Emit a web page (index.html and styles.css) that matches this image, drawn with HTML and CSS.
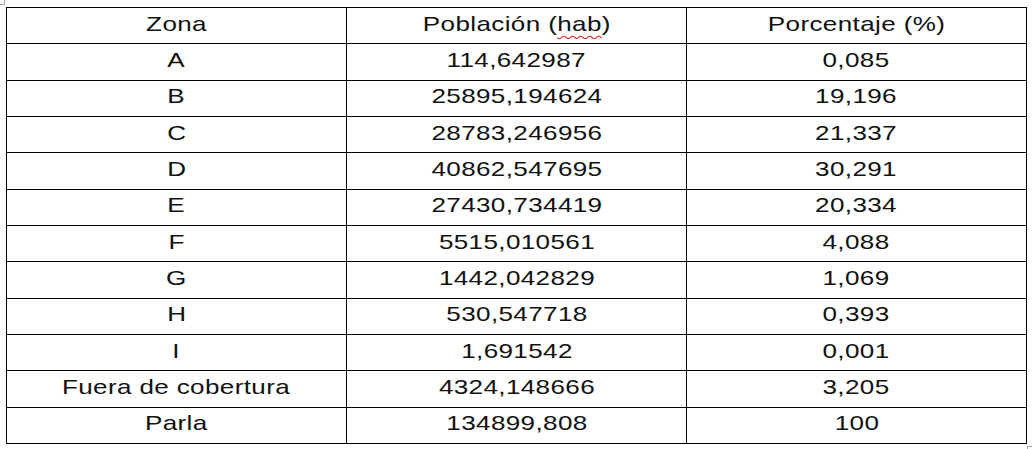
FILE: index.html
```html
<!DOCTYPE html>
<html lang="es">
<head>
<meta charset="utf-8">
<title>Tabla</title>
<link rel="stylesheet" href="styles.css">
</head>
<body>
<div class="page">
  <span class="mark mark-tl"></span>
  <div class="grid">
    <div class="cell"><span class="t">Zona</span></div>
    <div class="cell"><span class="t">Población (<span class="spell">hab</span>)</span></div>
    <div class="cell"><span class="t">Porcentaje (%)</span></div>

    <div class="cell"><span class="t">A</span></div>
    <div class="cell"><span class="t">114,642987</span></div>
    <div class="cell"><span class="t">0,085</span></div>

    <div class="cell"><span class="t">B</span></div>
    <div class="cell"><span class="t">25895,194624</span></div>
    <div class="cell"><span class="t">19,196</span></div>

    <div class="cell"><span class="t">C</span></div>
    <div class="cell"><span class="t">28783,246956</span></div>
    <div class="cell"><span class="t">21,337</span></div>

    <div class="cell"><span class="t">D</span></div>
    <div class="cell"><span class="t">40862,547695</span></div>
    <div class="cell"><span class="t">30,291</span></div>

    <div class="cell"><span class="t">E</span></div>
    <div class="cell"><span class="t">27430,734419</span></div>
    <div class="cell"><span class="t">20,334</span></div>

    <div class="cell"><span class="t">F</span></div>
    <div class="cell"><span class="t">5515,010561</span></div>
    <div class="cell"><span class="t">4,088</span></div>

    <div class="cell"><span class="t">G</span></div>
    <div class="cell"><span class="t">1442,042829</span></div>
    <div class="cell"><span class="t">1,069</span></div>

    <div class="cell"><span class="t">H</span></div>
    <div class="cell"><span class="t">530,547718</span></div>
    <div class="cell"><span class="t">0,393</span></div>

    <div class="cell"><span class="t">I</span></div>
    <div class="cell"><span class="t">1,691542</span></div>
    <div class="cell"><span class="t">0,001</span></div>

    <div class="cell"><span class="t">Fuera de cobertura</span></div>
    <div class="cell"><span class="t">4324,148666</span></div>
    <div class="cell"><span class="t">3,205</span></div>

    <div class="cell"><span class="t">Parla</span></div>
    <div class="cell"><span class="t">134899,808</span></div>
    <div class="cell"><span class="t">100</span></div>
  </div>
  <span class="mark mark-br"></span>
</div>
</body>
</html>
```

FILE: styles.css
```css
html, body {
  margin: 0;
  padding: 0;
  background: #ffffff;
}

.page {
  position: relative;
  width: 1032px;
  height: 449px;
  padding: 7px 0 0 6px;
  box-sizing: border-box;
}

.grid {
  display: grid;
  grid-template-columns: 339px 339px 339px;
  grid-template-rows: repeat(12, 1fr);
  gap: 1px;
  padding: 1px;
  width: 1021px;
  height: 437px;
  box-sizing: border-box;
  background: #000000;
}

.cell {
  background: #ffffff;
  display: flex;
  align-items: center;
  justify-content: center;
  padding-bottom: 4px;
  box-sizing: border-box;
  overflow: hidden;
}

.t {
  display: inline-block;
  font-family: "Liberation Sans", Arial, sans-serif;
  font-size: 21px;
  line-height: 24px;
  letter-spacing: 0.3px;
  color: #111111;
  white-space: nowrap;
  transform: scaleX(1.24);
}

.spell {
  text-decoration: underline wavy #e0201a;
  text-decoration-thickness: 1px;
  text-underline-offset: 4px;
}

.mark {
  position: absolute;
  width: 5px;
  height: 5px;
  box-sizing: border-box;
}

.mark-tl {
  left: 0;
  top: 0;
  border-right: 1px solid #a6a6a6;
  border-bottom: 1px solid #a6a6a6;
}

.mark-br {
  left: 1027px;
  top: 446px;
  border-left: 1px solid #a6a6a6;
  border-top: 1px solid #a6a6a6;
}
```
